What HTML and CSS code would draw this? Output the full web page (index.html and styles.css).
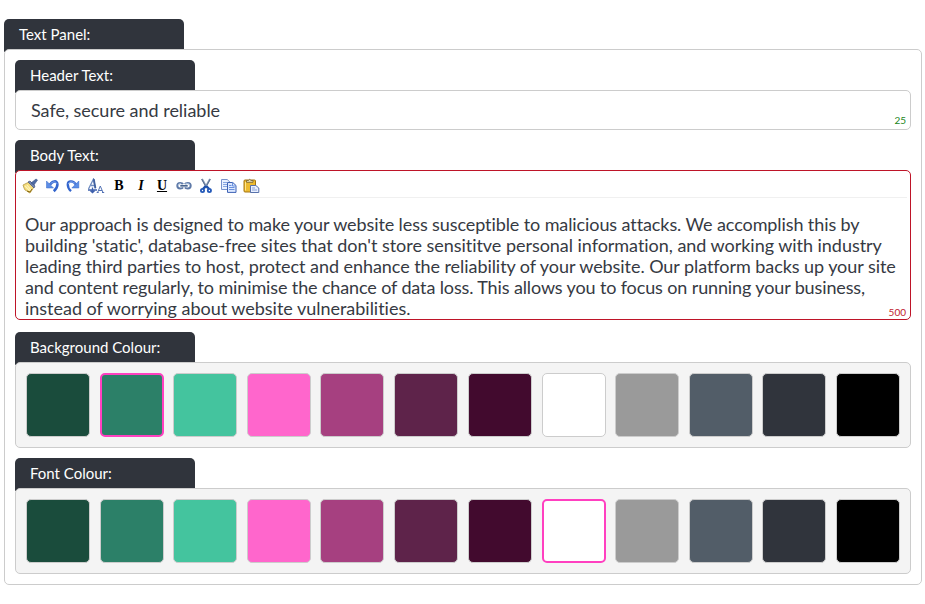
FILE: index.html
```
<!DOCTYPE html>
<html lang="en">
<head>
<meta charset="utf-8">
<title>Text Panel</title>
<link rel="stylesheet" href="styles.css">
</head>
<body>
<div class="tab">Text Panel:</div>
<div class="panel">
  <div class="tab">Header Text:</div>
  <div class="box header-box"><span class="value">Safe, secure and reliable</span><span class="count ok">25</span></div>

  <div class="tab">Body Text:</div>
  <div class="box editor">
    <div class="toolbar">
      <svg width="16" height="16" viewBox="0 0 16 16"><path d="M1 7l6-3 5 5-4 6-2-1-1-1-2-1-1-2z" fill="#f4dc7c" stroke="#b59a48" stroke-width=".8"/><path d="M3 8l5 5M5 7l4 5" stroke="#fff4b8" stroke-width="1.2"/><path d="M5 13l3 1 2-3" stroke="#8a6914" fill="none"/><path d="M6 4l2-1 5 5-1 2z" fill="#7486b0" stroke="#40527e" stroke-width=".7"/><path d="M9 5l5-4 1.5 1L12 7z" fill="#4e6ba3" stroke="#3b5284" stroke-width=".6"/></svg>
      <svg class="undo" width="16" height="16" viewBox="0 0 16 16"><path d="M5 6.6C7.5 2.6 12.2 2.2 12.4 6.4c.1 2.6-1.3 4.8-3.6 6.8" fill="none" stroke="#3264cc" stroke-width="2.6"/><path d="M5.5 5.8C8 3.2 11.4 3.2 12 6.2" fill="none" stroke="#8db2f4" stroke-width="1"/><path d="M1.5 3v7h7z" fill="#5c8de6" stroke="#3468c9" stroke-width=".5"/></svg>
      <svg class="redo" width="16" height="16" viewBox="0 0 16 16"><path d="M11 6.6C8.5 2.6 3 2.2 2.8 6.4c-.1 2.6.9 4.8 3.2 6.8" fill="none" stroke="#3264cc" stroke-width="2.4"/><path d="M10.5 5.8C8 3.2 3.8 3.2 3.3 6.2" fill="none" stroke="#8db2f4" stroke-width="1"/><path d="M13.8 3v7h-7z" fill="#5c8de6" stroke="#3468c9" stroke-width=".5"/></svg>
      <svg class="case" width="18" height="16" viewBox="0 0 18 16"><path d="M1.5 11L6.5 1l1.8 9.5M4 7.5h4" fill="none" stroke="#6f8cc0" stroke-width="1.3"/><path d="M6.8 1.2l1.6 9" stroke="#40609f" stroke-width="1.8"/><path d="M1 12h9M5.5 9.5v5M3.5 12.7l2 2 2-2" fill="none" stroke="#3e60ad" stroke-width="1.3"/><path d="M10.6 14.5l2.7-6.5L16 14.5M11.5 12.5h3.5M9.7 14.5h2M15 14.5h2.2" fill="none" stroke="#5473b5"/></svg>
      <b class="glyph">B</b>
      <b class="glyph slant">I</b>
      <b class="glyph under">U</b>
      <svg width="16" height="16" viewBox="0 0 16 16"><g fill="none"><path d="M7 6.2C6.5 5 5.5 5 4.2 5 2.2 5 1.3 6 1.3 7.8s1 2.7 2.9 2.7c1.3 0 2.3 0 2.8-1.2M9 6.2C9.5 5 10.5 5 11.8 5c2 0 2.9 1 2.9 2.8s-1 2.7-2.9 2.7c-1.3 0-2.3 0-2.8-1.2" stroke="#5f7aa8" stroke-width="2"/><path d="M2 7.2Q2.3 5.5 5 5.5M9.5 5.5q4-.5 4.4 1.5" stroke="#b8cbe6" stroke-width=".8"/><path d="M4.3 7.8h7.4" stroke="#49658f" stroke-width="1.7"/></g></svg>
      <svg width="16" height="16" viewBox="0 0 16 16"><path d="M4 1l5 9M12 1L7 10" stroke="#8498b5" stroke-width="1.8" fill="none"/><path d="M3.6 1l3.6 6.5M12.4 1L9 7" stroke="#536685" stroke-width=".8"/><path d="M7.8 8L5 11m3.2-3l3 3" stroke="#1c4fab" stroke-width="2.4"/><circle cx="4.5" cy="12.5" r="1.6" fill="#fff" stroke="#2459b9" stroke-width="1.8"/><circle cx="11.4" cy="12.5" r="1.6" fill="#fff" stroke="#2459b9" stroke-width="1.8"/></svg>
      <svg class="duplicate" width="16" height="16" viewBox="0 0 16 16"><path d="M.5 1.5h5.7L9 4.2v7.3H.5z" fill="#e8f0ff" stroke="#7892cc"/><path d="M2 4.5h4M2 6.5h5M2 8.5h5" stroke="#86a5e2"/><path d="M6.5 4.5h5.3l3.2 3v6.9H6.5z" fill="#dce8ff" stroke="#3e62b4"/><path d="M11.5 4.5V8H15M8 7.5h2.5M8 9.5h5.5M8 11.5h5.5" stroke="#6a91dd" fill="none"/></svg>
      <svg width="17" height="16" viewBox="0 0 17 16"><rect x="1" y="2" width="11.5" height="12" rx="1" fill="#edbb31" stroke="#a47512"/><path d="M2.5 4v8.5" stroke="#ffe58b"/><path d="M3.5 4.3V2.5h2Q6.5 0 8 2.5h2v1.8z" fill="#e9dfb7" stroke="#71602e" stroke-width=".8"/><path d="M7.5 7.5h5.3l3 2.5v4.5H7.5z" fill="#e8efff" stroke="#5771ab"/><path d="M9 10h3M9 12h5" stroke="#8ba3d6"/></svg>
    </div>
    <p class="copy">
      <span class="l1">Our approach is designed to make your website less susceptible to malicious attacks. We accomplish this by</span>
      <span class="l2">building 'static', database-free sites that don't store sensititve personal information, and working with industry</span>
      <span class="l3">leading third parties to host, protect and enhance the reliability of your website. Our platform backs up your site</span>
      <span class="l4">and content regularly, to minimise the chance of data loss. This allows you to focus on running your business,</span>
      <span class="l5">instead of worrying about website vulnerabilities.</span>
    </p>
    <span class="count over">500</span>
  </div>

  <div class="tab">Background Colour:</div>
  <div class="box swatches">
    <i class="c1"></i><i class="c2 selected"></i><i class="c3"></i><i class="c4"></i><i class="c5"></i><i class="c6"></i><i class="c7"></i><i class="c8"></i><i class="c9"></i><i class="c10"></i><i class="c11"></i><i class="c12"></i>
  </div>

  <div class="tab">Font Colour:</div>
  <div class="box swatches">
    <i class="c1"></i><i class="c2"></i><i class="c3"></i><i class="c4"></i><i class="c5"></i><i class="c6"></i><i class="c7"></i><i class="c8 selected"></i><i class="c9"></i><i class="c10"></i><i class="c11"></i><i class="c12"></i>
  </div>
</div>
</body>
</html>
```
FILE: styles.css
```
* { box-sizing: border-box; }
body {
  margin: 0;
  padding: 19px 3px 0 4px;
  background: #fff;
  color: #30343c;
  font-family: Lato, sans-serif;
  font-variant-ligatures: none;
}
.tab {
  width: 180px;
  height: 35px;
  margin-bottom: -5px;
  padding-left: 15px;
  border-radius: 5px 5px 0 0;
  background: #30343c;
  color: #fff;
  font-size: 15px;
  line-height: 31px;
  clip-path: polygon(0 0, 100% 0, 100% 30px, 8px 30px, 0 33px);
}
.panel, .box {
  position: relative;
  border: 1px solid #ccc;
  border-radius: 5px;
  background: #fff;
}
.panel {
  height: 536px;
  padding: 10px;
}
.header-box {
  height: 40px;
  margin-bottom: 10px;
  padding-left: 15px;
  font-size: 18px;
  line-height: 38px;
}
.value { letter-spacing: -.02px; }
.value, .copy, .count { opacity: .97; }
.editor {
  height: 150px;
  margin-bottom: 12px;
  border-color: #be1428;
}
.count {
  position: absolute;
  right: 4px;
  bottom: 2px;
  font-size: 10px;
  line-height: 13px;
}
.ok { color: #148214; }
.over { color: #be1428; bottom: 0; }
.toolbar {
  display: flex;
  gap: 6px;
  height: 27px;
  margin: 0 3px;
  padding: 7px 0 0 3px;
  border-bottom: 1px solid #f0f0f0;
}
.toolbar svg { flex: none; }
.toolbar .undo { margin-left: 1px; }
.toolbar .redo { margin-left: -2px; }
.toolbar .case { margin: 0; }
.toolbar .duplicate { margin-left: 1px; }
.glyph {
  width: 16px;
  height: 16px;
  color: #000;
  font: bold 14px/16px "Liberation Serif", serif;
  text-align: center;
}
.slant { font-style: italic; }
.under {
  margin: 0 0 0 -1px;
  text-decoration: underline;
  text-underline-offset: 1px;
}
.copy {
  width: 880px;
  margin: 16px 0 0 9px;
  font-size: 18px;
  line-height: 21px;
}
.copy span {
  display: block;
  width: max-content;
}
.l1 { letter-spacing: -.095px; }
.l2 { letter-spacing: -.035px; }
.l3 { letter-spacing: -.06px; }
.l4 { letter-spacing: -.127px; }
.l5 { letter-spacing: -.02px; }
.swatches {
  display: flex;
  gap: 9px;
  height: 86px;
  margin-bottom: 10px;
  padding: 10px;
  background: #f4f4f4;
}
.swatches i {
  width: 64px;
  height: 64px;
  border: 1px solid #ccc;
  border-radius: 5px;
}
.swatches i:nth-child(even), .swatches .c7 { margin-left: 1px; }
.swatches .selected { border: 2px solid #ff40c0; }
.c1 { background: #1a4c3c; }
.c2 { background: #2c8068; }
.c3 { background: #44c49e; }
.c4 { background: #ff66cc; }
.c5 { background: #a64080; }
.c6 { background: #5e234a; }
.c7 { background: #420a2e; }
.c8 { background: #fff; }
.c9 { background: #9a9a9a; }
.c10 { background: #525d68; }
.c11 { background: #30343c; }
.c12 { background: #000; }
```
